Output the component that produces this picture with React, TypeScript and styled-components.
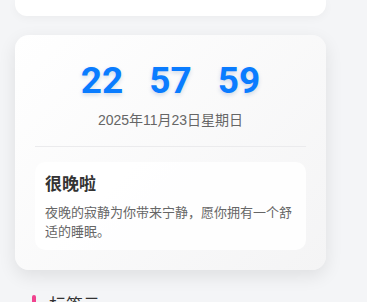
import styled, { createGlobalStyle } from "styled-components";

const GlobalStyle = createGlobalStyle`
    html, body {
        margin: 0;
        padding: 0;
        background: #f4f5f7;
        font-family: "Noto Sans", "Noto Sans CJK SC", sans-serif;
        overflow: hidden;
    }
`;

const Page = styled.div`
    width: 311px;
    padding: 0 15px;
    display: flex;
    flex-direction: column;
`;

const TopCardTail = styled.div`
    height: 16px;
    background: #ffffff;
    border-radius: 0 0 12px 12px;
    box-shadow: 0 2px 10px rgba(0, 0, 0, 0.04);
`;

const ClockCard = styled.div`
    margin-top: 19px;
    padding: 22px 20px 20px;
    border-radius: 14px;
    background: linear-gradient(135deg, #ffffff 0%, #f4f4f5 100%);
    box-shadow: 0 6px 18px rgba(0, 0, 0, 0.09);
    display: flex;
    flex-direction: column;
`;

const TimeRow = styled.div`
    display: flex;
    justify-content: center;
    gap: 26px;
`;

const TimeUnit = styled.span`
    font-family: "Roboto", sans-serif;
    font-size: 37px;
    font-weight: 700;
    line-height: 48px;
    color: #0a7cff;
    text-shadow: 0 2px 4px rgba(0, 60, 140, 0.18);
`;

const DateText = styled.div`
    margin-top: 4px;
    text-align: center;
    font-family: "Liberation Sans", "Noto Sans CJK SC", sans-serif;
    font-size: 14px;
    line-height: 22px;
    color: #666666;
`;

const Divider = styled.div`
    height: 1px;
    margin: 15px 0;
    background: #ebebed;
`;

const MessageBox = styled.div`
    padding: 10px;
    border-radius: 10px;
    background: rgba(255, 255, 255, 0.85);
`;

const MessageTitle = styled.div`
    font-family: "Noto Sans CJK SC", sans-serif;
    font-size: 17px;
    font-weight: 700;
    line-height: 22px;
    color: #333333;
`;

const MessageBody = styled.p`
    margin: 8px 0 0;
    font-family: "Noto Sans CJK SC", sans-serif;
    font-size: 13px;
    line-height: 19px;
    color: #666666;
`;

const SectionHeader = styled.div`
    margin: 22px 0 0 17px;
    display: flex;
    align-items: center;
    gap: 13px;
`;

const SectionBar = styled.span`
    width: 4px;
    height: 18px;
    border-radius: 2px;
    background: #f0438f;
`;

const SectionTitle = styled.span`
    font-family: "Noto Sans CJK SC", sans-serif;
    font-size: 17px;
    line-height: 24px;
    color: #333333;
`;

const App = () => (
    <>
        <GlobalStyle />
        <Page>
            <TopCardTail />
            <ClockCard>
                <TimeRow>
                    <TimeUnit>22</TimeUnit>
                    <TimeUnit>57</TimeUnit>
                    <TimeUnit>59</TimeUnit>
                </TimeRow>
                <DateText>2025年11月23日星期日</DateText>
                <Divider />
                <MessageBox>
                    <MessageTitle>很晚啦</MessageTitle>
                    <MessageBody>
                        夜晚的寂静为你带来宁静，愿你拥有一个舒适的睡眠。
                    </MessageBody>
                </MessageBox>
            </ClockCard>
            <SectionHeader>
                <SectionBar />
                <SectionTitle>标签云</SectionTitle>
            </SectionHeader>
        </Page>
    </>
);

export default App;
